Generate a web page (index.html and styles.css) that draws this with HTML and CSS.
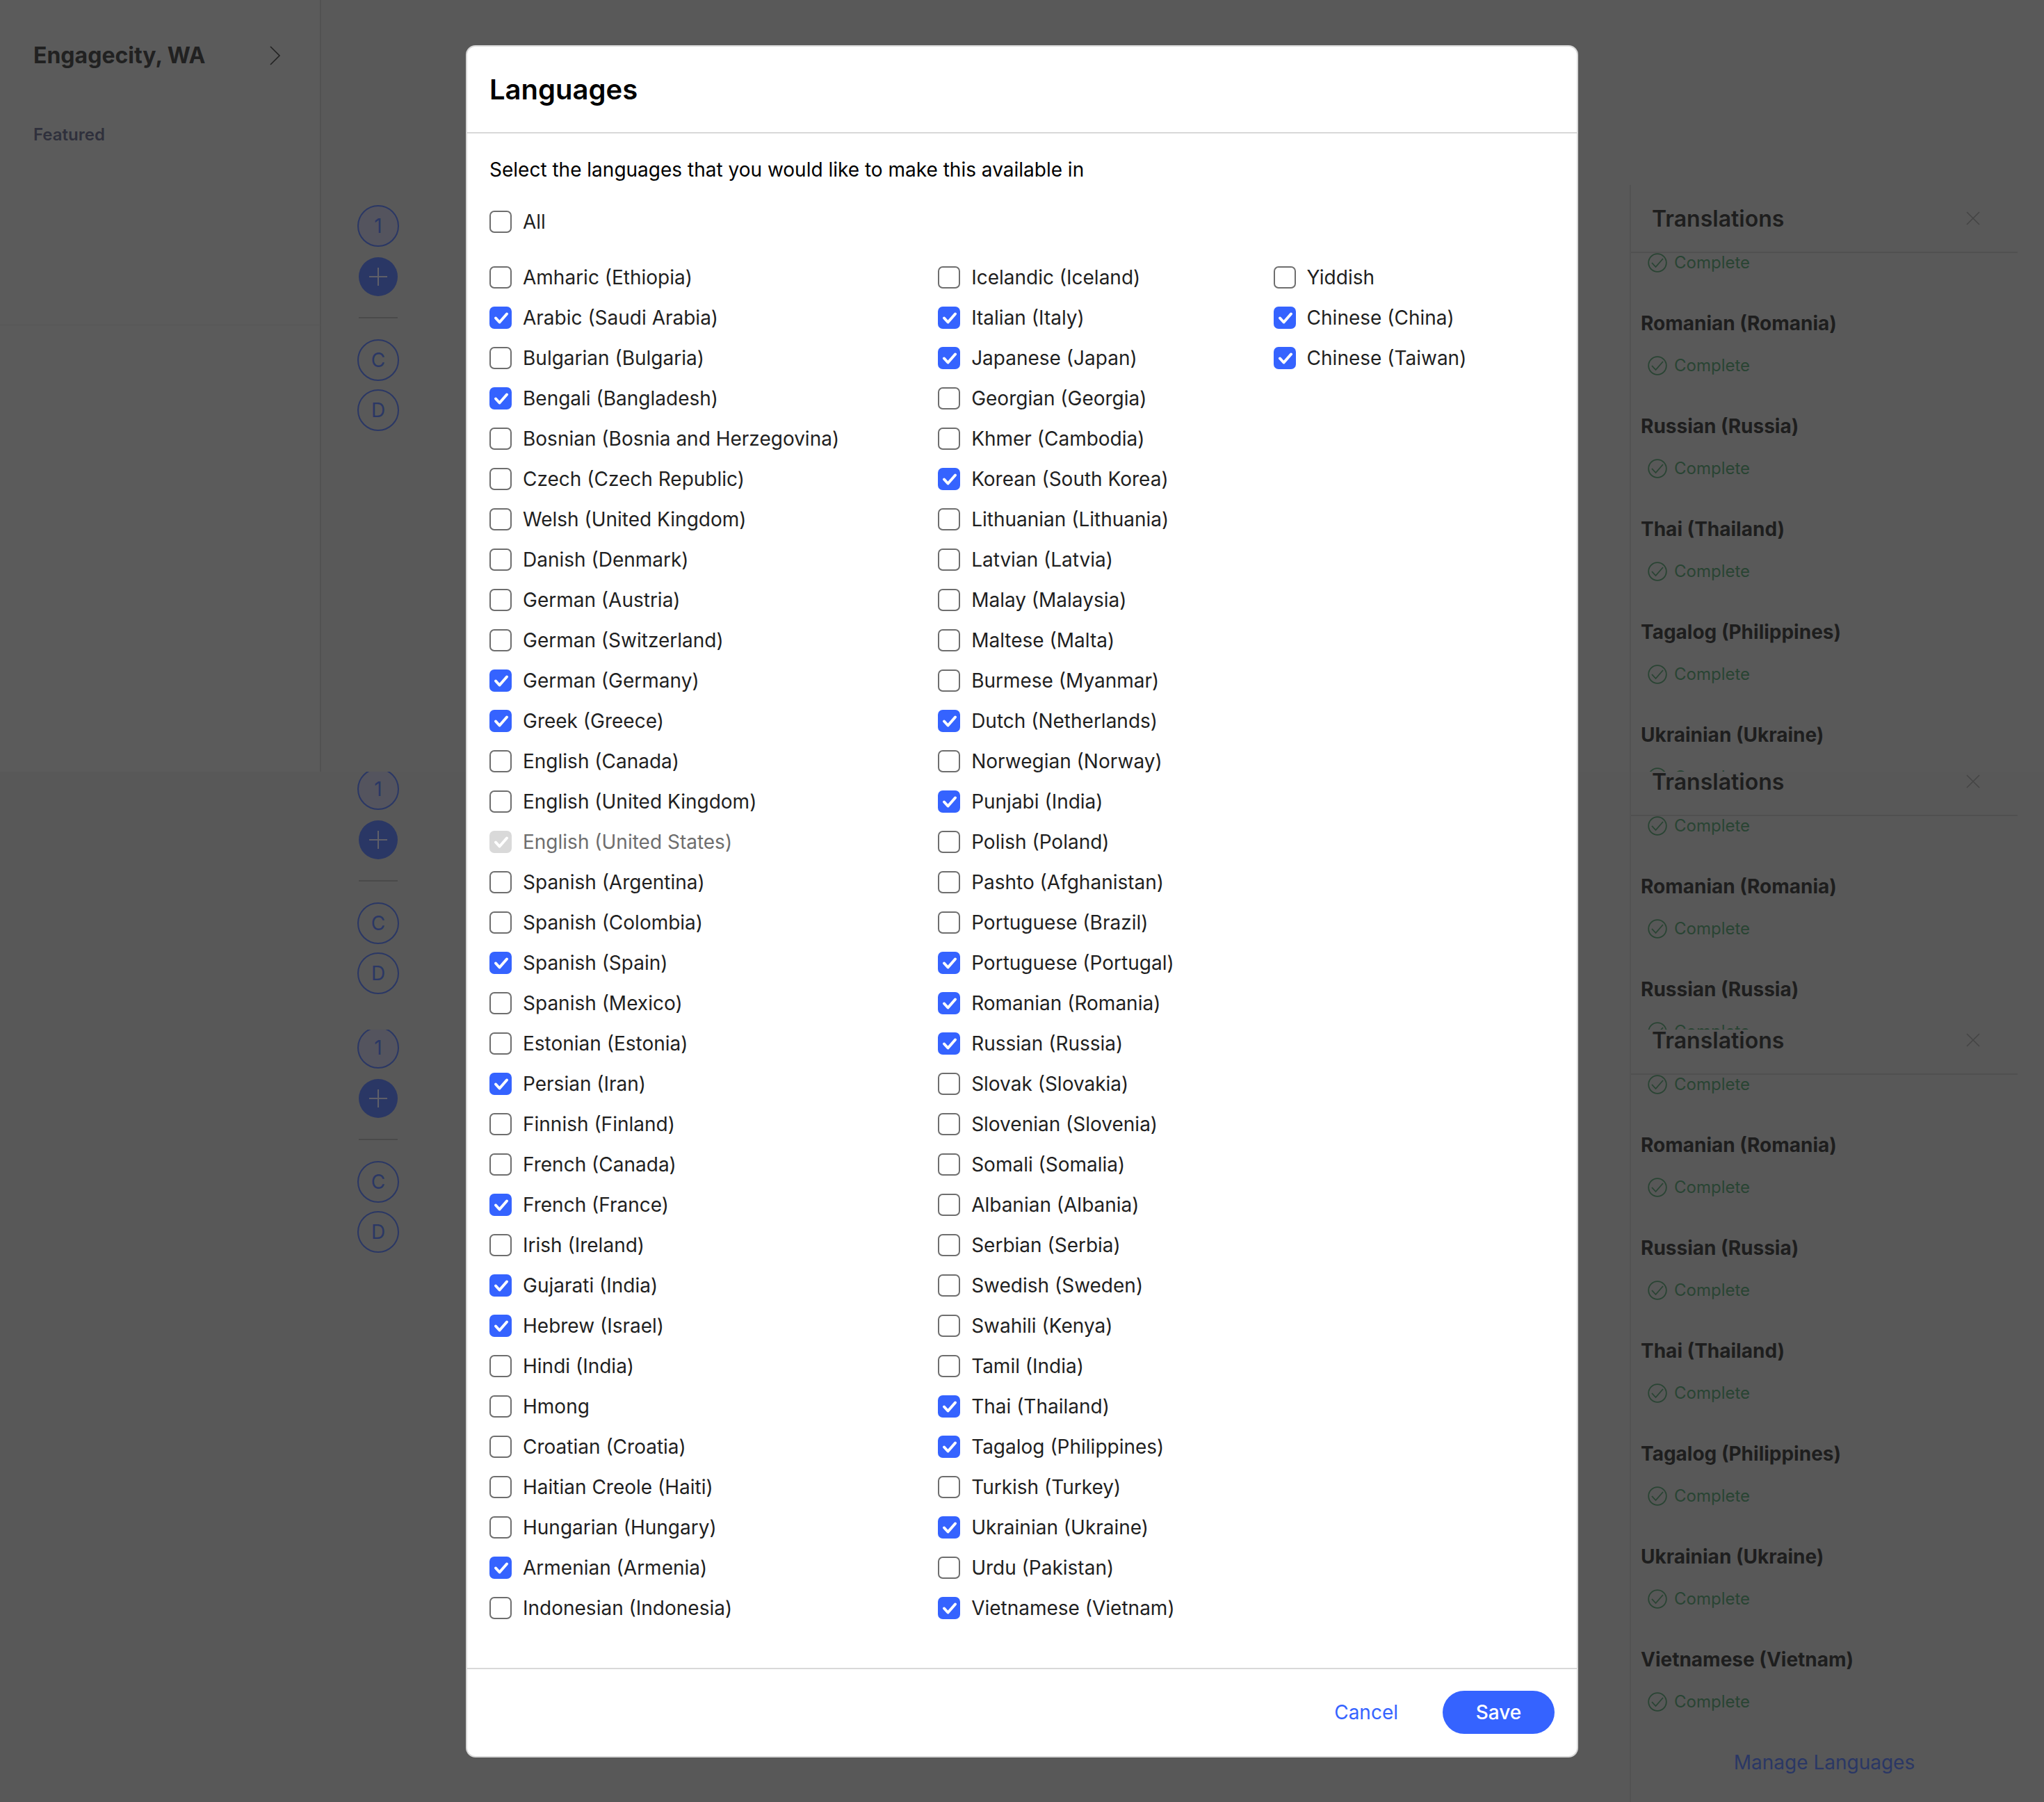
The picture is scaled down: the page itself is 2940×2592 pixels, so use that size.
FILE: index.html
```html
<!DOCTYPE html>
<html lang="en">
<head>
<meta charset="utf-8">
<title>Languages</title>
<link rel="stylesheet" href="styles.css">
</head>
<body>
<svg class="defs" aria-hidden="true">
  <symbol id="chk" viewBox="0 0 32 32"><path d="M9 16.5l5.5 6 10.5-12" fill="none" stroke="#fff" stroke-width="4" stroke-linecap="round" stroke-linejoin="round"/></symbol>
  <symbol id="ok" viewBox="0 0 28 28"><circle cx="14" cy="14" r="12.8" fill="none" stroke="currentColor" stroke-width="1.8"/><path d="M6 14l5.5 6 10.5-12" fill="none" stroke="currentColor" stroke-width="1.8"/></symbol>
  <symbol id="plus" viewBox="0 0 56 56"><path d="M15 28h26M28 15v26" stroke="#5f5f68" stroke-width="2"/></symbol>
  <symbol id="x" viewBox="0 0 20 20"><path d="M1 1l18 18M19 1L1 19" stroke="#454545" stroke-width="1.6"/></symbol>
</svg>

<main class="app">
  <section class="pane pane-first">
    <div class="screen">
      <aside class="side side-open">
        <div class="side-top">
          <div class="city"><span>Engagecity, WA</span>
            <svg class="chev" viewBox="0 0 18 28"><path d="M2 1l13 13L2 27" fill="none" stroke="#222" stroke-width="1.6"/></svg>
          </div>
          <div class="featured">Featured</div>
        </div>
      </aside>
      <div class="rail">
        <div class="dot dot-soft">1</div><div class="dot dot-fill"><svg class="plus"><use href="#plus"/></svg></div><div class="rule"></div><div class="dot">C</div><div class="dot">D</div>
      </div>
      <aside class="panel">
        <header class="panel-head"><span>Translations</span><svg class="close"><use href="#x"/></svg></header>
        <div class="stat"><svg class="stat-ic"><use href="#ok"/></svg>Complete</div>
        <div class="lang">Romanian (Romania)</div><div class="stat"><svg class="stat-ic"><use href="#ok"/></svg>Complete</div>
        <div class="lang">Russian (Russia)</div><div class="stat"><svg class="stat-ic"><use href="#ok"/></svg>Complete</div>
        <div class="lang">Thai (Thailand)</div><div class="stat"><svg class="stat-ic"><use href="#ok"/></svg>Complete</div>
        <div class="lang">Tagalog (Philippines)</div><div class="stat"><svg class="stat-ic"><use href="#ok"/></svg>Complete</div>
        <div class="lang">Ukrainian (Ukraine)</div><div class="stat"><svg class="stat-ic"><use href="#ok"/></svg>Complete</div>
      </aside>
    </div>
  </section>

  <section class="pane pane-second">
    <div class="screen">
      <div class="side"></div>
      <div class="rail">
        <div class="dot dot-soft">1</div><div class="dot dot-fill"><svg class="plus"><use href="#plus"/></svg></div><div class="rule"></div><div class="dot">C</div><div class="dot">D</div>
      </div>
      <aside class="panel">
        <header class="panel-head"><span>Translations</span><svg class="close"><use href="#x"/></svg></header>
        <div class="stat"><svg class="stat-ic"><use href="#ok"/></svg>Complete</div>
        <div class="lang">Romanian (Romania)</div><div class="stat"><svg class="stat-ic"><use href="#ok"/></svg>Complete</div>
        <div class="lang">Russian (Russia)</div><div class="stat"><svg class="stat-ic"><use href="#ok"/></svg>Complete</div>
      </aside>
    </div>
  </section>

  <section class="pane pane-third">
    <div class="screen">
      <div class="side"></div>
      <div class="rail">
        <div class="dot dot-soft">1</div><div class="dot dot-fill"><svg class="plus"><use href="#plus"/></svg></div><div class="rule"></div><div class="dot">C</div><div class="dot">D</div>
      </div>
      <aside class="panel">
        <header class="panel-head"><span>Translations</span><svg class="close"><use href="#x"/></svg></header>
        <div class="stat"><svg class="stat-ic"><use href="#ok"/></svg>Complete</div>
        <div class="lang">Romanian (Romania)</div><div class="stat"><svg class="stat-ic"><use href="#ok"/></svg>Complete</div>
        <div class="lang">Russian (Russia)</div><div class="stat"><svg class="stat-ic"><use href="#ok"/></svg>Complete</div>
        <div class="lang">Thai (Thailand)</div><div class="stat"><svg class="stat-ic"><use href="#ok"/></svg>Complete</div>
        <div class="lang">Tagalog (Philippines)</div><div class="stat"><svg class="stat-ic"><use href="#ok"/></svg>Complete</div>
        <div class="lang">Ukrainian (Ukraine)</div><div class="stat"><svg class="stat-ic"><use href="#ok"/></svg>Complete</div>
        <div class="lang">Vietnamese (Vietnam)</div><div class="stat"><svg class="stat-ic"><use href="#ok"/></svg>Complete</div>
        <a class="manage">Manage Languages</a>
      </aside>
    </div>
  </section>
</main>

<div class="scrim">
  <div class="modal" role="dialog">
    <header class="modal-head"><h1>Languages</h1></header>
    <div class="modal-body">
      <p class="desc">Select the languages that you would like to make this available in</p>
      <div class="opt opt-all"><span class="box"></span>All</div>
      <div class="cols">
        <div class="col">
          <div class="opt"><span class="box"></span>Amharic (Ethiopia)</div>
          <div class="opt"><span class="box on"><svg><use href="#chk"/></svg></span>Arabic (Saudi Arabia)</div>
          <div class="opt"><span class="box"></span>Bulgarian (Bulgaria)</div>
          <div class="opt"><span class="box on"><svg><use href="#chk"/></svg></span>Bengali (Bangladesh)</div>
          <div class="opt"><span class="box"></span>Bosnian (Bosnia and Herzegovina)</div>
          <div class="opt"><span class="box"></span>Czech (Czech Republic)</div>
          <div class="opt"><span class="box"></span>Welsh (United Kingdom)</div>
          <div class="opt"><span class="box"></span>Danish (Denmark)</div>
          <div class="opt"><span class="box"></span>German (Austria)</div>
          <div class="opt"><span class="box"></span>German (Switzerland)</div>
          <div class="opt"><span class="box on"><svg><use href="#chk"/></svg></span>German (Germany)</div>
          <div class="opt"><span class="box on"><svg><use href="#chk"/></svg></span>Greek (Greece)</div>
          <div class="opt"><span class="box"></span>English (Canada)</div>
          <div class="opt"><span class="box"></span>English (United Kingdom)</div>
          <div class="opt opt-off"><span class="box off"><svg><use href="#chk"/></svg></span>English (United States)</div>
          <div class="opt"><span class="box"></span>Spanish (Argentina)</div>
          <div class="opt"><span class="box"></span>Spanish (Colombia)</div>
          <div class="opt"><span class="box on"><svg><use href="#chk"/></svg></span>Spanish (Spain)</div>
          <div class="opt"><span class="box"></span>Spanish (Mexico)</div>
          <div class="opt"><span class="box"></span>Estonian (Estonia)</div>
          <div class="opt"><span class="box on"><svg><use href="#chk"/></svg></span>Persian (Iran)</div>
          <div class="opt"><span class="box"></span>Finnish (Finland)</div>
          <div class="opt"><span class="box"></span>French (Canada)</div>
          <div class="opt"><span class="box on"><svg><use href="#chk"/></svg></span>French (France)</div>
          <div class="opt"><span class="box"></span>Irish (Ireland)</div>
          <div class="opt"><span class="box on"><svg><use href="#chk"/></svg></span>Gujarati (India)</div>
          <div class="opt"><span class="box on"><svg><use href="#chk"/></svg></span>Hebrew (Israel)</div>
          <div class="opt"><span class="box"></span>Hindi (India)</div>
          <div class="opt"><span class="box"></span>Hmong</div>
          <div class="opt"><span class="box"></span>Croatian (Croatia)</div>
          <div class="opt"><span class="box"></span>Haitian Creole (Haiti)</div>
          <div class="opt"><span class="box"></span>Hungarian (Hungary)</div>
          <div class="opt"><span class="box on"><svg><use href="#chk"/></svg></span>Armenian (Armenia)</div>
          <div class="opt"><span class="box"></span>Indonesian (Indonesia)</div>
        </div>
        <div class="col">
          <div class="opt"><span class="box"></span>Icelandic (Iceland)</div>
          <div class="opt"><span class="box on"><svg><use href="#chk"/></svg></span>Italian (Italy)</div>
          <div class="opt"><span class="box on"><svg><use href="#chk"/></svg></span>Japanese (Japan)</div>
          <div class="opt"><span class="box"></span>Georgian (Georgia)</div>
          <div class="opt"><span class="box"></span>Khmer (Cambodia)</div>
          <div class="opt"><span class="box on"><svg><use href="#chk"/></svg></span>Korean (South Korea)</div>
          <div class="opt"><span class="box"></span>Lithuanian (Lithuania)</div>
          <div class="opt"><span class="box"></span>Latvian (Latvia)</div>
          <div class="opt"><span class="box"></span>Malay (Malaysia)</div>
          <div class="opt"><span class="box"></span>Maltese (Malta)</div>
          <div class="opt"><span class="box"></span>Burmese (Myanmar)</div>
          <div class="opt"><span class="box on"><svg><use href="#chk"/></svg></span>Dutch (Netherlands)</div>
          <div class="opt"><span class="box"></span>Norwegian (Norway)</div>
          <div class="opt"><span class="box on"><svg><use href="#chk"/></svg></span>Punjabi (India)</div>
          <div class="opt"><span class="box"></span>Polish (Poland)</div>
          <div class="opt"><span class="box"></span>Pashto (Afghanistan)</div>
          <div class="opt"><span class="box"></span>Portuguese (Brazil)</div>
          <div class="opt"><span class="box on"><svg><use href="#chk"/></svg></span>Portuguese (Portugal)</div>
          <div class="opt"><span class="box on"><svg><use href="#chk"/></svg></span>Romanian (Romania)</div>
          <div class="opt"><span class="box on"><svg><use href="#chk"/></svg></span>Russian (Russia)</div>
          <div class="opt"><span class="box"></span>Slovak (Slovakia)</div>
          <div class="opt"><span class="box"></span>Slovenian (Slovenia)</div>
          <div class="opt"><span class="box"></span>Somali (Somalia)</div>
          <div class="opt"><span class="box"></span>Albanian (Albania)</div>
          <div class="opt"><span class="box"></span>Serbian (Serbia)</div>
          <div class="opt"><span class="box"></span>Swedish (Sweden)</div>
          <div class="opt"><span class="box"></span>Swahili (Kenya)</div>
          <div class="opt"><span class="box"></span>Tamil (India)</div>
          <div class="opt"><span class="box on"><svg><use href="#chk"/></svg></span>Thai (Thailand)</div>
          <div class="opt"><span class="box on"><svg><use href="#chk"/></svg></span>Tagalog (Philippines)</div>
          <div class="opt"><span class="box"></span>Turkish (Turkey)</div>
          <div class="opt"><span class="box on"><svg><use href="#chk"/></svg></span>Ukrainian (Ukraine)</div>
          <div class="opt"><span class="box"></span>Urdu (Pakistan)</div>
          <div class="opt"><span class="box on"><svg><use href="#chk"/></svg></span>Vietnamese (Vietnam)</div>
        </div>
        <div class="col">
          <div class="opt"><span class="box"></span>Yiddish</div>
          <div class="opt"><span class="box on"><svg><use href="#chk"/></svg></span>Chinese (China)</div>
          <div class="opt"><span class="box on"><svg><use href="#chk"/></svg></span>Chinese (Taiwan)</div>
        </div>
      </div>
    </div>
    <footer class="modal-foot">
      <a class="cancel">Cancel</a>
      <a class="save">Save</a>
    </footer>
  </div>
</div>
</body>
</html>
```

FILE: styles.css
```css
* { box-sizing: border-box; }
html, body { margin: 0; padding: 0; }
body {
  width: 2940px;
  height: 2592px;
  overflow: hidden;
  position: relative;
  background: #585858;
  font-family: Inter, "Liberation Sans", sans-serif;
}
.defs { width: 0; height: 0; display: block; }

.app { display: flex; flex-direction: column; }
.pane { overflow: hidden; }
.pane-first { height: 1110px; background: #595959; }
.pane-second { height: 371px; }
.pane-third { height: 1111px; }
.pane-second .screen { margin-top: -300px; }
.pane-third .screen { margin-top: -299px; }

.screen { display: flex; height: 1410px; }
.side { width: 462px; flex: none; }
.side-open { border-right: 2px solid #525252; background: #5b5b5b; }
.side-top { height: 468px; padding: 56px 0 0 48px; border-bottom: 1px solid #555; margin-right: -1px; }
.city { display: flex; align-items: center; width: 357px; justify-content: space-between; font-size: 32px; line-height: 48px; font-weight: 700; color: #212121; }
.chev { width: 18px; height: 28px; }
.featured { margin-top: 73px; font-size: 24px; line-height: 34px; font-weight: 600; color: #2f303c; }

.rail { width: 60px; margin-left: 52px; flex: none; padding-top: 295px; display: flex; flex-direction: column; align-items: center; }
.dot {
  width: 60px; height: 60px; border-radius: 50%;
  border: 2px solid #2a3765; color: #2a3765;
  font-size: 28px; display: flex; align-items: center; justify-content: center;
  margin-bottom: 12px;
}
.dot-soft { background: #54545e; margin-bottom: 15px; }
.dot-fill { width: 56px; height: 56px; border: 0; background: #2a3765; margin-bottom: 30px; }
.plus { width: 56px; height: 56px; }
.rule { width: 56px; height: 2px; background: #4a4a4a; margin-bottom: 30px; }

.panel { width: 558px; margin: 266px 38px 0 auto; border-left: 2px solid #525252; }
.panel-head {
  height: 98px; border-bottom: 2px solid #505050;
  display: flex; align-items: center; justify-content: space-between;
  padding: 0 54px 0 30px;
  font-size: 32px; font-weight: 600; color: #1e1e1e;
}
.close { width: 20px; height: 20px; }
.lang { margin: 0 0 26px 14px; height: 40px; line-height: 40px; font-size: 28px; font-weight: 700; color: #1e1e1e; white-space: nowrap; }
.stat { margin: -1px 0 54px 24px; display: flex; align-items: center; height: 28px; font-size: 24px; color: #294433; gap: 10px; }
.lang + .stat { margin-top: 0; }
.stat-ic { width: 28px; height: 28px; margin-top: 2px; color: #294433; flex: none; }
.manage { display: block; text-align: center; font-size: 28px; line-height: 40px; color: #2a3765; }

.scrim {
  position: absolute; inset: 0;
  display: flex; align-items: center; justify-content: center;
}
.modal {
  width: 1600px; height: 2463px;
  background: #fff;
  border: 2px solid #d8d8d8;
  border-radius: 14px;
  display: flex; flex-direction: column;
  color: #1f1f1f;
}
.modal-head { height: 125px; border-bottom: 2px solid #d8d8d8; padding: 0 32px; display: flex; align-items: center; flex: none; }
.modal-head h1 { margin: 0; font-size: 40px; font-weight: 600; color: #000; }
.modal-body { flex: 1; padding: 36px 32px 0; }
.desc { margin: 0 0 30px; font-size: 28px; line-height: 32px; color: #000; }
.opt { display: flex; align-items: center; height: 58px; font-size: 28px; gap: 16px; white-space: nowrap; }
.opt-all { margin-bottom: 22px; }
.opt-off { color: #6e6e6e; }
.box { width: 32px; height: 32px; flex: none; border: 2px solid #6e6e6e; border-radius: 7px; background: #fff; }
.box svg { display: block; width: 32px; height: 32px; margin: -2px; }
.box.on { background: #3563ff; border-color: #3563ff; }
.box.off { background: #d9d9d9; border-color: #d9d9d9; }
.cols { display: flex; gap: 142px; }
.modal-foot { height: 127px; flex: none; border-top: 2px solid #d8d8d8; padding: 0 32px; display: flex; align-items: center; justify-content: flex-end; gap: 64px; font-size: 28px; }
.cancel { color: #3563ff; }
.save { width: 161px; height: 62px; border-radius: 31px; background: #3563ff; color: #fff; font-weight: 500; display: flex; align-items: center; justify-content: center; }
```
